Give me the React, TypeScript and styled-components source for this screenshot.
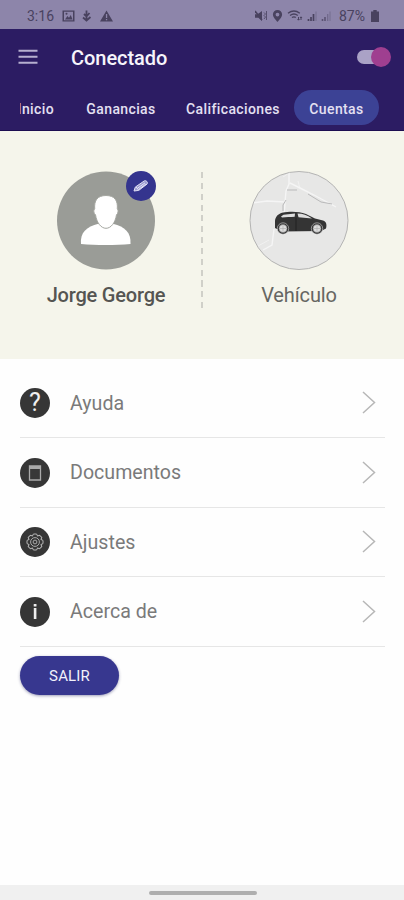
import React from 'react';
import styled, { createGlobalStyle } from 'styled-components';

const GlobalStyle = createGlobalStyle`
  * { box-sizing: border-box; }
  html, body { margin: 0; padding: 0; background: #fefefe; }
  body { font-family: Roboto, "Liberation Sans", sans-serif; overflow: hidden; }
  button { font-family: inherit; border: 0; padding: 0; background: none; }
  svg { display: block; flex: none; }
`;

const Screen = styled.div`
  width: 404px;
  height: 900px;
  display: flex;
  flex-direction: column;
  overflow: hidden;
  background: #fefefe;
`;

const StatusBar = styled.div`
  height: 29px;
  flex: none;
  display: flex;
  align-items: center;
  justify-content: space-between;
  padding: 2px 25px 0 27px;
  background: #8d85aa;
  color: #49425f;
`;

const StatusGroup = styled.div<{ $gap: number }>`
  display: flex;
  align-items: center;
  gap: ${(p) => p.$gap}px;
`;

const StatusText = styled.span<{ $width: number }>`
  width: ${(p) => p.$width}px;
  font-size: 14px;
  line-height: 16px;
  white-space: nowrap;
`;

const Header = styled.header`
  height: 102px;
  flex: none;
  background: #2c1c63;
  border-bottom: 1px solid #1c0d50;
  overflow: hidden;
`;

const TitleRow = styled.div`
  height: 56px;
  display: flex;
  align-items: center;
  padding: 0 13px 0 18px;
`;

const Title = styled.h1`
  margin: 1px 0 0 33px;
  flex: 1;
  font-size: 20px;
  font-weight: 500;
  letter-spacing: -0.05px;
  line-height: 24px;
  color: #f6f4fb;
`;

const SwitchTrack = styled.div`
  width: 29px;
  height: 14px;
  margin-right: 5px;
  display: flex;
  align-items: center;
  border-radius: 7px;
  background: #aaa2c6;
`;

const SwitchKnob = styled.div`
  flex: none;
  width: 20px;
  height: 20px;
  margin-left: 14px;
  border-radius: 50%;
  background: #9f3f90;
`;

const Tabs = styled.nav`
  height: 45px;
  display: flex;
  align-items: center;
  padding-left: 20px;
`;

const Tab = styled.button<{ $width: number; $gap?: number; $active?: boolean; $clipped?: boolean }>`
  flex: none;
  width: ${(p) => p.$width}px;
  height: ${(p) => (p.$active ? 35 : 24)}px;
  margin-right: ${(p) => p.$gap ?? 0}px;
  padding-top: 2px;
  display: flex;
  align-items: center;
  justify-content: ${(p) => (p.$clipped ? 'flex-end' : 'center')};
  overflow: hidden;
  border-radius: ${(p) => (p.$active ? 18 : 0)}px;
  background: ${(p) => (p.$active ? '#3c4295' : 'transparent')};
  color: #e4e0f2;
  font-size: 14px;
  font-weight: 500;
  letter-spacing: 0.38px;
  white-space: nowrap;
`;

const Profile = styled.section`
  height: 228px;
  flex: none;
  display: grid;
  grid-template-columns: 201px 2px 1fr;
  padding-top: 40px;
  background: #f5f5eb;
`;

const ProfileCard = styled.div<{ $left?: number; $right?: number }>`
  display: flex;
  flex-direction: column;
  align-items: center;
  padding: 0 ${(p) => p.$right ?? 0}px 0 ${(p) => p.$left ?? 0}px;
`;

const Avatar = styled.div`
  position: relative;
  width: 100px;
  height: 99px;
`;

const EditBadge = styled.button`
  position: absolute;
  top: 0;
  right: 0;
  width: 30px;
  height: 30px;
  display: grid;
  place-items: center;
  border-radius: 50%;
  background: #34348e;
`;

const ProfileName = styled.div<{ $strong?: boolean }>`
  margin-top: 13px;
  font-size: 20px;
  line-height: 24px;
  font-weight: ${(p) => (p.$strong ? 500 : 400)};
  letter-spacing: ${(p) => (p.$strong ? -0.2 : -0.12)}px;
  color: ${(p) => (p.$strong ? '#555552' : '#666662')};
  white-space: nowrap;
`;

const DashedLine = styled.div`
  width: 2px;
  height: 138px;
  margin-top: 1px;
  background: repeating-linear-gradient(#d0d0c9 0 6px, transparent 6px 10.85px);
`;

const Menu = styled.ul`
  margin: 0 19px 0 20px;
  padding: 9.4px 0 0;
  list-style: none;
`;

const MenuRow = styled.li`
  height: 69.6px;
  display: flex;
  align-items: center;
  padding-right: 9px;
  border-bottom: 1px solid #e6e6e6;
`;

const MenuLabel = styled.span`
  flex: 1;
  margin: 2px 0 0 20px;
  font-size: 19.6px;
  line-height: 24px;
  letter-spacing: 0.02px;
  color: #7a7a7a;
`;

const LogoutButton = styled.button`
  flex: none;
  width: 99px;
  height: 39px;
  margin: 9px 0 0 20px;
  padding-top: 2px;
  border-radius: 20px;
  background: #37378f;
  box-shadow: 0 1px 3px rgba(40, 40, 100, 0.45);
  color: #f2f1fb;
  font-size: 15px;
  letter-spacing: 0.15px;
  line-height: 16px;
`;

const GestureArea = styled.footer`
  height: 15px;
  flex: none;
  margin-top: auto;
  padding: 6px 0 0 149px;
  background: #f0f0f0;
`;

const GestureBar = styled.div`
  width: 108px;
  height: 4px;
  border-radius: 2px;
  background: #afafaf;
`;

const LeftStatusIcons = () => (
  <svg width="52" height="14" viewBox="0 0 52 14" fill="currentColor">
    <path fillRule="evenodd" d="M.5 1.500h12v11H.5zM2 2.800v8.400h9V2.800z" />
    <path d="M3 10.500 5.400 7l1.600 1.700L8.700 6l1.900 4.500z" />
    <circle cx="4.500" cy="4.700" r="1" />
    <path d="M24.500 1.500v6M22 5l2.500 2.500L27.500 4M21 8.500l3.500 3 4-3.500M24.500 7v5" fill="none" stroke="currentColor" strokeWidth="1.800" />
    <path fillRule="evenodd" d="M44.500 1.500 51 12.500H38zM43.900 5v4h1.300V5zm0 5v1.300h1.300V10z" />
  </svg>
);

const RightStatusIcons = () => (
  <svg width="79" height="14" viewBox="0 0 79 14" fill="none" stroke="currentColor">
    <path d="M0 5.200h2.500L7 2v10L3.400 8.700H0z" fill="currentColor" stroke="none" />
    <path d="m0 2 7 9" strokeWidth="1.500" />
    <path d="M9 3.500 10.500 5 9 6.500 10.500 8 9 10M11.500 2v9" strokeWidth=".8" />
    <path fillRule="evenodd" d="M22.500 1a4.600 4.600 0 0 1 4.600 4.600c0 3-4.600 7.400-4.600 7.400s-4.600-4.400-4.600-7.400A4.600 4.600 0 0 1 22.500 1zm0 2.700a1.900 1.900 0 1 0 0 3.800 1.900 1.900 0 0 0 0-3.800z" fill="currentColor" stroke="none" />
    <path d="M33 4.300c3.600-2.800 8.300-2.800 11.800 0M35 6.500c2.500-1.900 5.400-1.900 7.800 0M37 8.600c1.300-1 2.600-1 3.800 0" strokeWidth="1.300" />
    <path d="M43.500 8v3M46 8v3M42.500 10l1 1.200 1-1.200M45 9l1-1.200L47 9" />
    <path d="M53.500 10v2M56 8v4M58.500 5v7" strokeWidth="1.700" />
    <path d="M61 2.500V12M75 2.500V12" strokeWidth="1" opacity=".35" />
    <path d="M67.500 10v2M70 8v4" strokeWidth="1.600" opacity=".75" />
    <path d="M72.700 5v7" strokeWidth="1.300" opacity=".4" />
  </svg>
);

const BatteryIcon = () => (
  <svg width="8" height="12" viewBox="0 0 8 12" fill="currentColor">
    <path d="M2.300 0h3.400v1.500H8V12H0V1.500h2.300z" />
  </svg>
);

const HamburgerIcon = () => (
  <svg width="20" height="16" viewBox="0 0 20 16" stroke="#b6afd0" strokeWidth="2">
    <path d="M.5 1.800h19M.5 7.800h19M.5 13.800h19" />
  </svg>
);

const PersonAvatar = () => (
  <svg width="100" height="99" viewBox="0 0 100 99">
    <circle cx="50" cy="49.500" r="49" fill="#9a9c97" />
    <path d="M25 73c-1.100-11.500 5.500-17.400 17.500-20.300h14.400C69 55.600 75.200 61.500 74.500 73c-15.500 1.400-34 1.400-49.500 0z" fill="#fff" />
    <path d="M50 24.500c8.700 0 12 5.200 11.300 13.300 1.500 1.200.7 5-.8 6-1.200 8-5.600 13.500-10.500 13.500s-9.300-5.500-10.500-13.500c-1.700-1-2.400-4.800-.8-6C38 29.700 41.300 24.500 50 24.500z" fill="#fff" stroke="#a5a7a1" strokeWidth="1" />
  </svg>
);

const PencilIcon = () => (
  <svg width="18" height="18" viewBox="0 0 18 18" fill="none" strokeLinejoin="round">
    <path d="m2 14 1.300-3.900 9-6.200c1.700-.9 4.100 1.400 2.700 3.200l-8.300 6.300z" fill="#9b9ad0" stroke="#e0dff2" />
    <path d="m5.500 11.200 7.500-5.300M6.800 12.300l7-5.100M4 10l2.800 3.200" stroke="#f4f4ff" strokeWidth=".8" />
  </svg>
);

const VehicleAvatar = () => (
  <svg width="100" height="99" viewBox="0 0 100 99">
    <defs>
      <clipPath id="map-circle"><circle cx="50" cy="49.500" r="49" /></clipPath>
    </defs>
    <circle cx="50" cy="49.500" r="49" fill="#e7e7e6" />
    <g clipPath="url(#map-circle)" fill="none" stroke="#f5f5f5" strokeWidth="1.400">
      <path d="M40 0v13l-3 7-1 11-18-1-15 2M41 12l12 6 12 6 13 7 9 5M25 58l-2 16-9 5M36 32l-1 13" />
      <path d="M40 2l-6 4M20 69l-11 6M51 18l-2-8" strokeWidth=".7" />
      <path d="M38 19h10m11 4 13 8 11 2M37 29l-3 5v6" stroke="#b9b9ba" strokeWidth="1" />
    </g>
    <circle cx="50" cy="49.500" r="49" fill="none" stroke="#b4b4b3" />
    <path d="M26 57V50c.5-4.500 3.200-7 7-8.200 10-1.700 17-1 24 1.300l9 4.400 8 2c3.500 1.200 4 4.400 3 8L72 60l-39 .4z" fill="#343434" />
    <path d="m32 45.400 2.500-1.600 11.500-1.200-.3 3.200c-4.500.1-8.500.6-12.700.8zm16.500-2.800c5.500.1 9.500 1.800 14.500 4.800l-13.500-1.100z" fill="#dedede" />
    <path d="M47 46.500V60" stroke="#151515" strokeWidth=".6" />
    {[34, 68].map((x) => (
      <g key={x}>
        <circle cx={x} cy="57.500" r="5.700" fill="#333" stroke="#efefef" strokeWidth=".5" />
        <circle cx={x} cy="57.500" r="4" fill="#dedede" stroke="#777" strokeWidth=".6" />
        <path d={`M${x - 3} 57.500h6M${x} 54.500v6`} stroke="#aaa" strokeWidth=".6" />
      </g>
    ))}
  </svg>
);

const RoundIcon = styled.div`
  width: 30px;
  height: 30px;
  margin-top: 1px;
  flex: none;
  display: grid;
  place-items: center;
  border-radius: 50%;
  background: #363636;
  color: #f0f0f0;
`;

const QuestionMark = styled.span`
  font-size: 25px;
  line-height: 30px;
`;

const DocumentIcon = () => (
  <svg width="14" height="16" viewBox="0 0 14 16" fill="none">
    <path d="M1.500 1h11v14h-11z" fill="#383838" stroke="#aaa" strokeWidth="1.300" />
    <path d="M1.500 1h11v3h-11z" fill="#aaa" />
  </svg>
);

const GearIcon = () => (
  <svg width="18" height="18" viewBox="0 0 18 18" fill="none" stroke="#b4b4b4">
    {[0, 45, 90, 135, 180, 225, 270, 315].map((angle) => (
      <path key={angle} d="m6.400 3.200 1-2.200h3.200l1 2.200" transform={`rotate(${angle} 9 9)`} strokeWidth="1" />
    ))}
    <circle cx="9" cy="9" r="4.400" strokeWidth=".9" />
    <circle cx="9" cy="9" r="1.900" strokeWidth=".9" />
  </svg>
);

const InfoIcon = () => (
  <svg width="6" height="17" viewBox="0 0 6 17" fill="#eee">
    <rect x="1.700" y="1" width="2.800" height="2.500" rx=".5" />
    <rect x="1.800" y="5" width="2.600" height="11" />
  </svg>
);

const Chevron = () => (
  <svg width="14" height="23" viewBox="0 0 14 23" fill="none" stroke="#b7b7b7" strokeWidth="1.500">
    <path d="m1 1 11.500 10.500L1 22" />
  </svg>
);

const menuItems = [
  { label: 'Ayuda', icon: <QuestionMark>?</QuestionMark> },
  { label: 'Documentos', icon: <DocumentIcon /> },
  { label: 'Ajustes', icon: <GearIcon /> },
  { label: 'Acerca de', icon: <InfoIcon /> },
];

export default function App() {
  return (
    <>
      <GlobalStyle />
      <Screen>
        <StatusBar>
          <StatusGroup $gap={8}>
            <StatusText $width={27}>3:16</StatusText>
            <LeftStatusIcons />
          </StatusGroup>
          <StatusGroup $gap={5}>
            <RightStatusIcons />
            <StatusText $width={27}>87%</StatusText>
            <BatteryIcon />
          </StatusGroup>
        </StatusBar>
        <Header>
          <TitleRow>
            <HamburgerIcon />
            <Title>Conectado</Title>
            <SwitchTrack><SwitchKnob /></SwitchTrack>
          </TitleRow>
          <Tabs>
            <Tab $width={34} $gap={31} $clipped>Inicio</Tab>
            <Tab $width={72} $gap={28}>Ganancias</Tab>
            <Tab $width={96} $gap={13}>Calificaciones</Tab>
            <Tab $width={85} $active>Cuentas</Tab>
          </Tabs>
        </Header>
        <Profile>
          <ProfileCard $left={11}>
            <Avatar>
              <PersonAvatar />
              <EditBadge aria-label="Editar"><PencilIcon /></EditBadge>
            </Avatar>
            <ProfileName $strong>Jorge George</ProfileName>
          </ProfileCard>
          <DashedLine />
          <ProfileCard $right={9}>
            <VehicleAvatar />
            <ProfileName>Vehículo</ProfileName>
          </ProfileCard>
        </Profile>
        <Menu>
          {menuItems.map((item) => (
            <MenuRow key={item.label}>
              <RoundIcon>{item.icon}</RoundIcon>
              <MenuLabel>{item.label}</MenuLabel>
              <Chevron />
            </MenuRow>
          ))}
        </Menu>
        <LogoutButton>SALIR</LogoutButton>
        <GestureArea><GestureBar /></GestureArea>
      </Screen>
    </>
  );
}
